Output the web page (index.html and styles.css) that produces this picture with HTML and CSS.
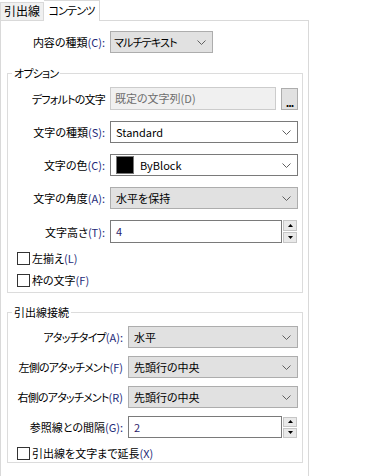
FILE: index.html
```html
<!DOCTYPE html>
<html lang="ja">
<head>
<meta charset="utf-8">
<link rel="stylesheet" href="styles.css">
</head>
<body>
<div class="tabs">
  <div class="tab">引出線</div>
  <div class="tab active">コンテンツ</div>
</div>
<div class="panel">
  <div class="form top">
    <div class="lbl">内容の種類<span class="mn">(C):</span></div>
    <div class="select gray short"><span class="val cond">マルチテキスト</span><svg class="chev" width="9" height="5" viewBox="0 0 9 5"><path d="M0.5 0.5 L4.5 4.5 L8.5 0.5" fill="none" stroke="#606060" stroke-width="1"/></svg></div>
  </div>

  <fieldset class="group g1">
    <legend class="cond">オプション</legend>
    <div class="form f1">
      <div class="lbl cond">デフォルトの文字</div>
      <div class="withbtn">
        <div class="input disabled">既定の文字列(D)</div>
        <div class="dots">...</div>
      </div>

      <div class="lbl">文字の種類<span class="mn">(S):</span></div>
      <div class="select white"><span class="val">Standard</span><svg class="chev" width="9" height="5" viewBox="0 0 9 5"><path d="M0.5 0.5 L4.5 4.5 L8.5 0.5" fill="none" stroke="#606060" stroke-width="1"/></svg></div>

      <div class="lbl">文字の色<span class="mn">(C):</span></div>
      <div class="select white"><span class="val"><span class="swatch"></span>ByBlock</span><svg class="chev" width="9" height="5" viewBox="0 0 9 5"><path d="M0.5 0.5 L4.5 4.5 L8.5 0.5" fill="none" stroke="#606060" stroke-width="1"/></svg></div>

      <div class="lbl">文字の角度<span class="mn">(A):</span></div>
      <div class="select gray"><span class="val">水平を保持</span><svg class="chev" width="9" height="5" viewBox="0 0 9 5"><path d="M0.5 0.5 L4.5 4.5 L8.5 0.5" fill="none" stroke="#606060" stroke-width="1"/></svg></div>

      <div class="lbl">文字高さ<span class="mn">(T):</span></div>
      <div class="withspin">
        <div class="input num">4</div>
        <div class="spin">
          <div class="sb"><svg width="5" height="3" viewBox="0 0 5 3"><path d="M2.5 0 L5 3 L0 3 Z" fill="#000"/></svg></div>
          <div class="sb"><svg width="5" height="3" viewBox="0 0 5 3"><path d="M0 0 L5 0 L2.5 3 Z" fill="#000"/></svg></div>
        </div>
      </div>
    </div>
    <div class="checks c1">
      <div class="check"><span class="box"></span>左揃え<span class="mn">(L)</span></div>
      <div class="check"><span class="box"></span>枠の文字<span class="mn">(F)</span></div>
    </div>
  </fieldset>

  <fieldset class="group g2">
    <legend>引出線接続</legend>
    <div class="form f2">
      <div class="lbl cond">アタッチタイプ<span class="mn">(A):</span></div>
      <div class="select gray"><span class="val">水平</span><svg class="chev" width="9" height="5" viewBox="0 0 9 5"><path d="M0.5 0.5 L4.5 4.5 L8.5 0.5" fill="none" stroke="#606060" stroke-width="1"/></svg></div>

      <div class="lbl cond">左側のアタッチメント<span class="mn">(F)</span></div>
      <div class="select gray"><span class="val">先頭行の中央</span><svg class="chev" width="9" height="5" viewBox="0 0 9 5"><path d="M0.5 0.5 L4.5 4.5 L8.5 0.5" fill="none" stroke="#606060" stroke-width="1"/></svg></div>

      <div class="lbl cond">右側のアタッチメント<span class="mn">(R)</span></div>
      <div class="select gray"><span class="val">先頭行の中央</span><svg class="chev" width="9" height="5" viewBox="0 0 9 5"><path d="M0.5 0.5 L4.5 4.5 L8.5 0.5" fill="none" stroke="#606060" stroke-width="1"/></svg></div>

      <div class="lbl">参照線との間隔<span class="mn">(G):</span></div>
      <div class="withspin">
        <div class="input num">2</div>
        <div class="spin">
          <div class="sb"><svg width="5" height="3" viewBox="0 0 5 3"><path d="M2.5 0 L5 3 L0 3 Z" fill="#000"/></svg></div>
          <div class="sb"><svg width="5" height="3" viewBox="0 0 5 3"><path d="M0 0 L5 0 L2.5 3 Z" fill="#000"/></svg></div>
        </div>
      </div>
    </div>
    <div class="checks c2">
      <div class="check"><span class="box"></span>引出線を文字まで延長<span class="mn">(X)</span></div>
    </div>
  </fieldset>
</div>
</body>
</html>
```

FILE: styles.css
```css
* { box-sizing: border-box; }
html, body { margin: 0; padding: 0; background: #fff; }
body {
  font-family: "Noto Sans CJK JP", "Noto Sans", sans-serif;
  font-size: 11px;
  color: #000;
  font-feature-settings: "palt";
  width: 383px;
  height: 476px;
  overflow: hidden;
}
.mn { color: #1d2a78; letter-spacing: 0; }
.cond { letter-spacing: -0.8px; }

.tabs { display: flex; align-items: flex-end; height: 20px; }
.tab {
  height: 18px;
  line-height: 16px;
  background: #f0f0f0;
  border: 1px solid #d9d9d9;
  border-bottom: none;
  width: 44px;
  text-align: center;
  white-space: nowrap;
  font-size: 12px;
}
.tab.active {
  height: 21px;
  width: 56px;
  background: #fff;
  border-left: none;
  margin-bottom: -1px;
  position: relative;
  z-index: 1;
  line-height: 18px;
  letter-spacing: -0.8px;
  font-size: 11px;
}

.panel {
  width: 309px;
  height: 460px;
  border: 1px solid #d9d9d9;
  border-bottom: none;
  padding-top: 10px;
}

.form { display: grid; column-gap: 5px; align-items: center; }
.form.top { grid-template-columns: 104px 103px; }
.f1 { grid-template-columns: 97px 188px; row-gap: 11px; padding-top: 6px; }
.f2 { grid-template-columns: 115px 170px; row-gap: 8px; padding-top: 6px; }

.lbl { justify-self: end; white-space: nowrap; line-height: 16px; }

.select {
  height: 22px;
  display: flex;
  align-items: center;
  justify-content: space-between;
  padding: 0 5px 0 5px;
  white-space: nowrap;
}
.select.gray { background: #e1e1e1; border: 1px solid #adadad; }
.select.white { background: #fff; border: 1px solid #7a7a7a; }
.select.short { padding-left: 3px; }
.val { display: flex; align-items: center; }
.swatch {
  width: 18px; height: 18px;
  background: #000;
  border: 1px solid #777;
  margin: 0 6px 0 0;
}
.chev { display: block; margin-right: 1px; }

.withbtn, .withspin { display: flex; align-items: center; justify-content: space-between; }
.input {
  height: 22px;
  line-height: 20px;
  padding: 0 5px;
  border: 1px solid #7a7a7a;
  background: #fff;
}
.input.disabled {
  width: 166px;
  height: 23px;
  background: #f0f0f0;
  border-color: #cccccc;
  color: #6d6d6d;
  padding-left: 4px;
}
.dots {
  width: 17px;
  height: 22px;
  background: #e1e1e1;
  border: 1px solid #adadad;
  text-align: center;
  line-height: 26px;
  font-weight: bold;
  font-size: 11px;
  letter-spacing: -1px;
}
.input.num { flex: 0 0 auto; color: #2b1d6a; }
.f1 .input.num { width: 172px; height: 23px; }
.f2 .input.num { width: 154px; }
.spin { display: flex; flex-direction: column; gap: 1px; margin-right: 1px; }
.sb {
  width: 14px;
  height: 11px;
  background: #e9e9e9;
  border: 1px solid #c6c6c6;
  display: flex;
  align-items: center;
  justify-content: center;
}
.f2 .sb { height: 10px; }
.sb svg { display: block; }

.group {
  margin: 12px 5px 0 6px;
  padding: 0 3px 0 0;
  border: 1px solid #dcdcdc;
  min-width: 0;
}
.group legend {
  margin-left: 4px;
  padding: 0 2px;
  line-height: 16px;
}
.g1 { padding-bottom: 1px; }
.g2 { margin-top: 11px; padding-bottom: 0; }

.checks { padding-left: 9px; }
.c1 { margin-top: 4px; }
.c2 { margin-top: 6px; }
.check { display: flex; align-items: center; height: 22px; white-space: nowrap; }
.c2 .check { height: 18px; }
.box {
  width: 13px; height: 13px;
  border: 1px solid #333;
  background: #fff;
  margin-right: 2px;
}
```
